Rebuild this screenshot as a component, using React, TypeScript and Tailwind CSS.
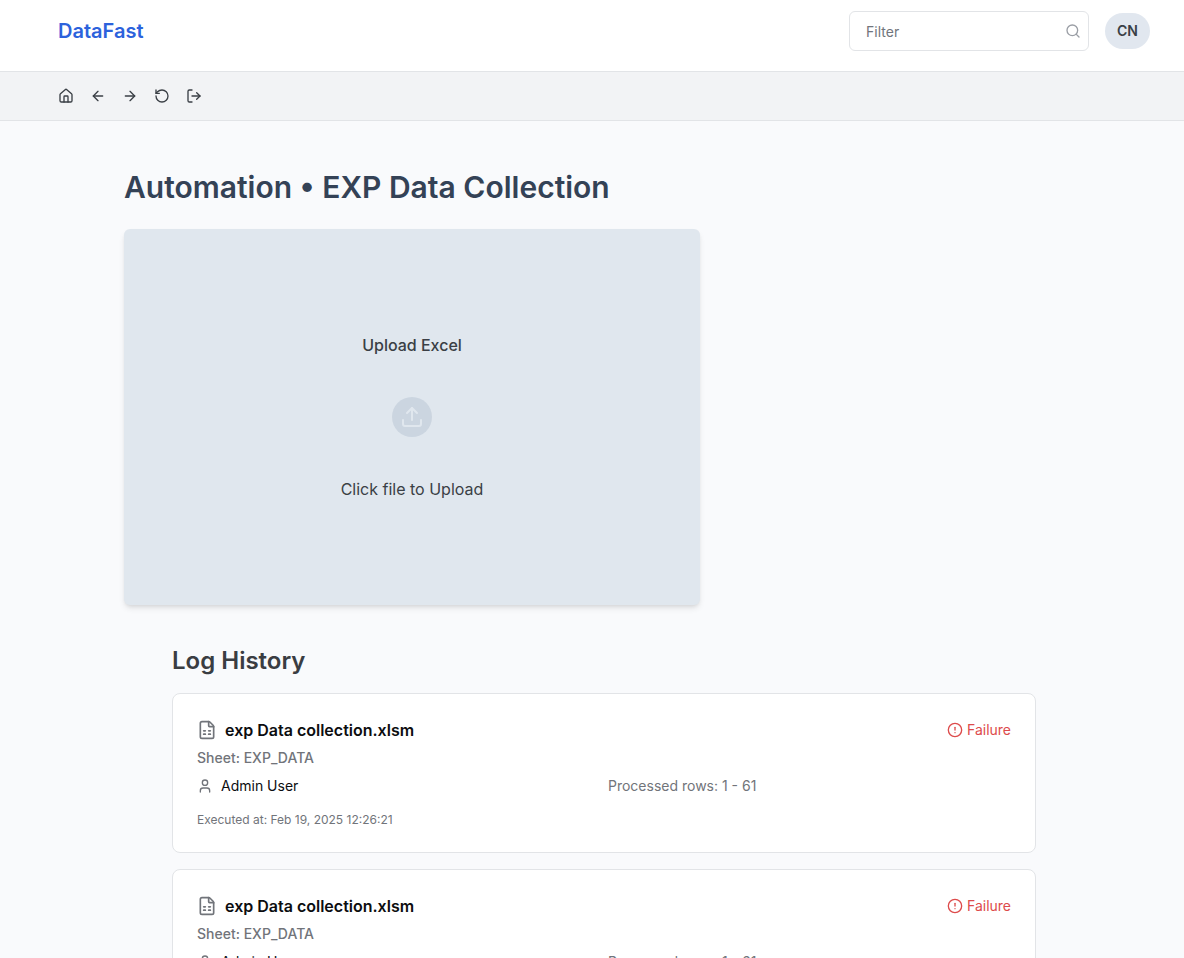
import { ArrowLeft, ArrowRight, CircleAlert, FileSpreadsheet, House, LogOut, RotateCcw, Search, Upload, User } from "lucide-react";

const actions = [
  { label: "Home", Icon: House },
  { label: "Back", Icon: ArrowLeft },
  { label: "Forward", Icon: ArrowRight },
  { label: "Reload", Icon: RotateCcw },
  { label: "Log out", Icon: LogOut },
];

const logs = [
  { id: 1, file: "exp Data collection.xlsm", sheet: "EXP_DATA", user: "Admin User", rows: "1 - 61", at: "Feb 19, 2025 12:26:21" },
  { id: 2, file: "exp Data collection.xlsm", sheet: "EXP_DATA", user: "Admin User", rows: "1 - 61", at: "Feb 19, 2025 12:26:21" },
];

type Log = (typeof logs)[number];

function Header() {
  return (
    <header className="flex items-start justify-between border-b border-[#e2e4e7] bg-white pt-[11px] pr-[34px] pb-5 pl-[58px]">
      <a href="#" className="flex h-10 items-center text-xl font-semibold text-[#2c62dc]">DataFast</a>
      <div className="flex h-10 items-center gap-4">
        <label className="flex h-10 w-60 items-center rounded-md border border-[#e2e4e7] bg-white pr-[7px] pl-4">
          <input type="text" placeholder="Filter" aria-label="Filter" className="h-full min-w-0 flex-1 bg-transparent pt-px text-sm text-[#3a3f45] outline-none placeholder:text-[#71757c]" />
          <Search className="size-4 text-[#9a9ea5]" aria-hidden="true" />
        </label>
        <button type="button" className="flex h-9 items-center rounded-full bg-[#e1e7ef] px-3 text-sm font-semibold text-[#3a3f45]">CN</button>
      </div>
    </header>
  );
}

function LogCard({ log }: { log: Log }) {
  return (
    <article className="rounded-lg border border-[#e2e4e7] bg-white p-6">
      <div className="flex items-center justify-between">
        <h3 className="flex items-center gap-2 text-base font-semibold text-[#0c0d10]">
          <FileSpreadsheet className="size-5 text-[#71747a]" aria-hidden="true" />
          {log.file}
        </h3>
        <span className="flex items-center gap-1 text-sm text-[#dd4b4b]">
          <CircleAlert className="size-4" aria-hidden="true" />
          Failure
        </span>
      </div>
      <p className="mt-1.5 text-sm font-medium text-[#71747a]">Sheet: {log.sheet}</p>
      <div className="mt-2 grid grid-cols-2 gap-2 text-sm">
        <span className="flex items-center gap-2 text-[#0c0d10]">
          <User className="size-4 text-[#71747a]" aria-hidden="true" />
          {log.user}
        </span>
        <span className="text-[#71747a]">Processed rows: {log.rows}</span>
      </div>
      <p className="mt-4 text-xs text-[#71747a]">Executed at: {log.at}</p>
    </article>
  );
}

export default function App() {
  return (
    <div className="min-h-screen bg-[#f9fafc] pb-12 font-['Inter',sans-serif]">
      <Header />
      <nav aria-label="Page actions" className="flex h-[49px] items-center gap-4 border-b border-[#e2e4e7] bg-[#f2f3f5] pl-[58px]">
        {actions.map(({ label, Icon }) => (
          <button key={label} type="button" aria-label={label} className="text-[#3a3f45]">
            <Icon className="size-4" />
          </button>
        ))}
      </nav>
      <main className="pt-12 pr-[100px] pl-[124px]">
        <h1 className="text-3xl font-semibold text-[#344256]">Automation • EXP Data Collection</h1>
        <label className="mt-6 flex h-94 w-3/5 cursor-pointer flex-col items-center justify-center gap-10 rounded-md bg-[#e0e7ee] text-base text-[#3a3f45] shadow-md">
          <span className="font-medium">Upload Excel</span>
          <span className="flex size-10 items-center justify-center rounded-full bg-[#cbd5e0] text-[#e0e7ee]">
            <Upload className="size-6" aria-hidden="true" />
          </span>
          <span>Click file to Upload</span>
          <input type="file" className="sr-only" />
        </label>
        <section className="px-12 pt-10">
          <h2 className="text-2xl font-semibold text-[#3a3d42]">Log History</h2>
          <div className="mt-4 flex flex-col gap-4">
            {logs.map((log) => (
              <LogCard key={log.id} log={log} />
            ))}
          </div>
        </section>
      </main>
    </div>
  );
}
